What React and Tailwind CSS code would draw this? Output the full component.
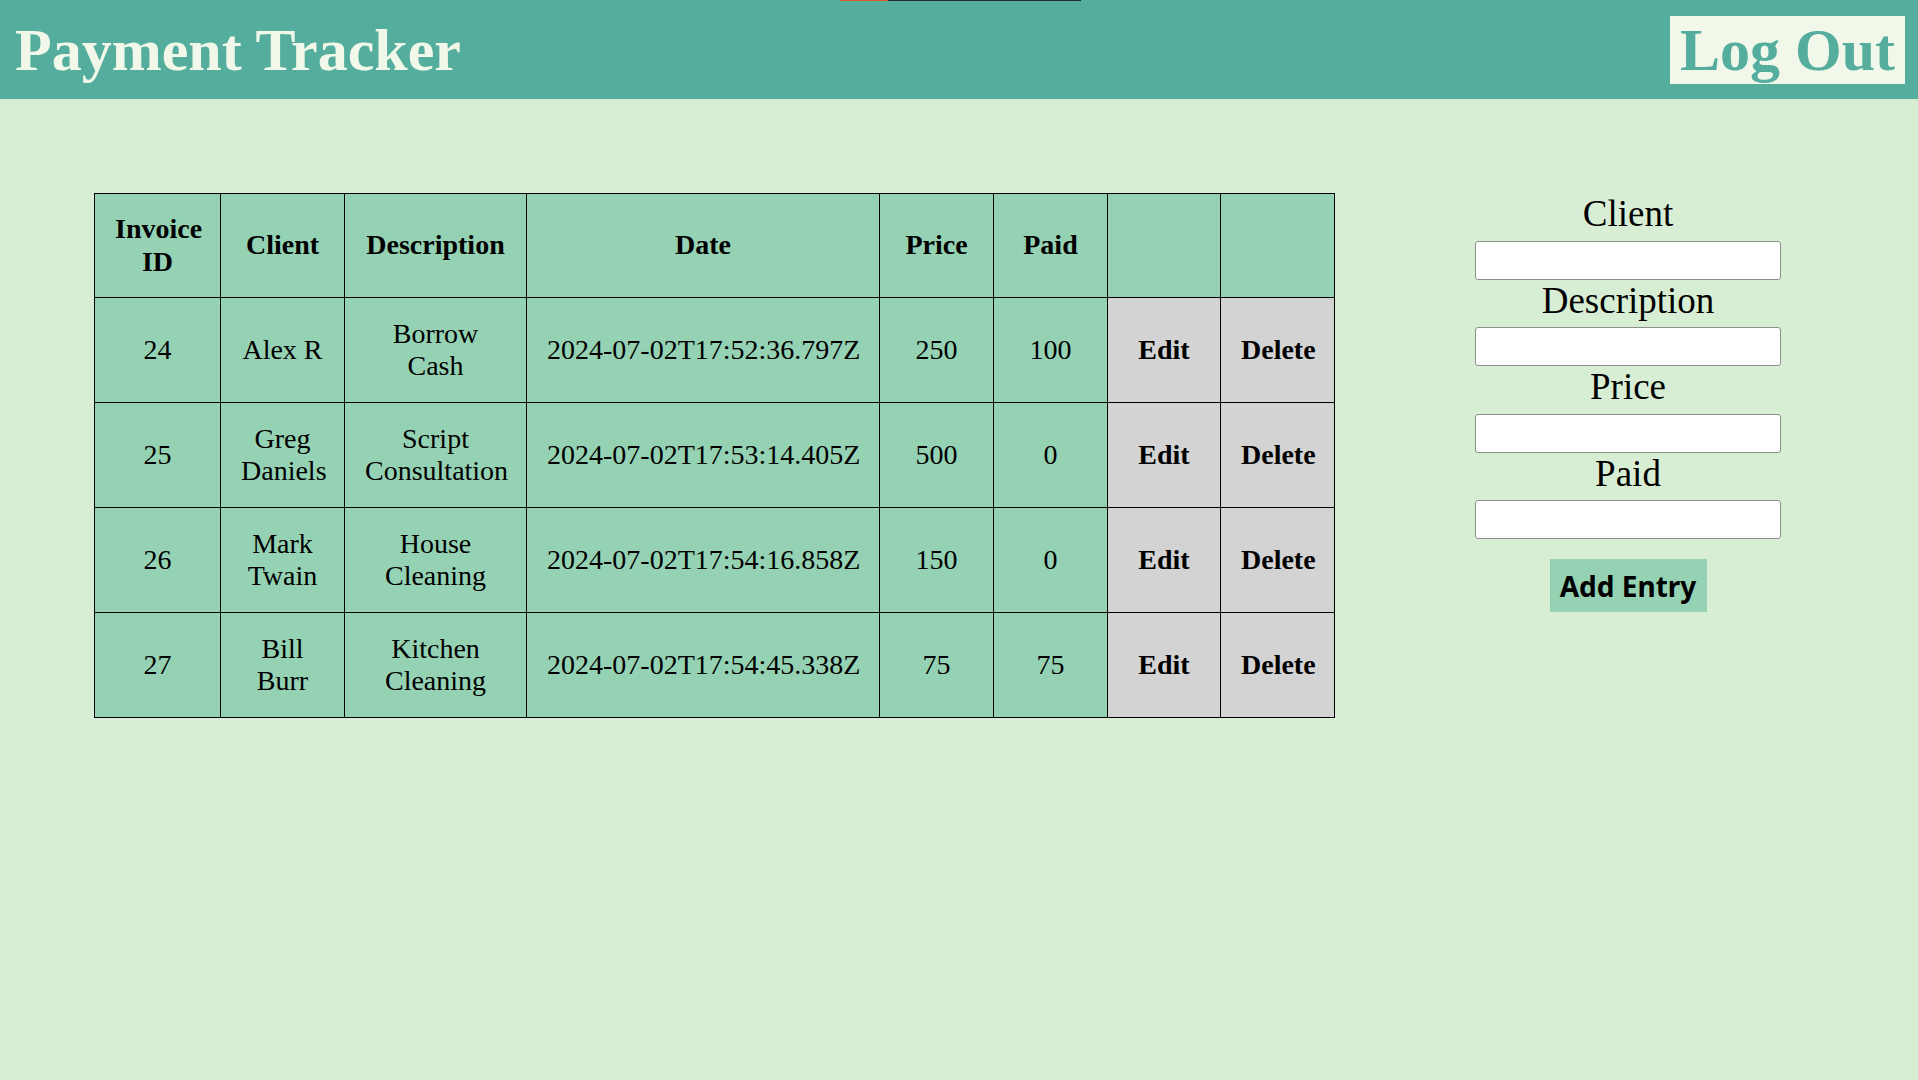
import React from "react";

const entries = [
  { id: 24, client: "Alex R", description: "Borrow Cash", date: "2024-07-02T17:52:36.797Z", price: 250, paid: 100 },
  { id: 25, client: "Greg Daniels", description: "Script Consultation", date: "2024-07-02T17:53:14.405Z", price: 500, paid: 0 },
  { id: 26, client: "Mark Twain", description: "House Cleaning", date: "2024-07-02T17:54:16.858Z", price: 150, paid: 0 },
  { id: 27, client: "Bill Burr", description: "Kitchen Cleaning", date: "2024-07-02T17:54:45.338Z", price: 75, paid: 75 },
];

const fields = ["Client", "Description", "Price", "Paid"];

const App = () => {
  return (
    <div className="min-h-screen bg-[#d8eed4] font-['Liberation_Serif',serif] text-black relative">
      {/* thin loading strip at the very top */}
      <div className="absolute top-0 left-[840px] flex h-px">
        <div className="w-[48px] bg-[#e0552f]"></div>
        <div className="w-[193px] bg-[#1f2937]"></div>
      </div>

      <header className="h-[99px] bg-[#55ae9d] flex items-center justify-between pl-[15px] pr-[13px]">
        <h1 className="text-[60px] font-bold leading-[68px] text-[#f1f8e9]">Payment Tracker</h1>
        <button className="h-[68px] px-[10px] bg-[#f1f8e9] text-[#55ae9d] text-[60px] font-bold leading-[68px]">
          Log Out
        </button>
      </header>

      <div className="flex items-start pt-[94px] pl-[94px]">
        <table className="table-fixed border-collapse w-[1240px] text-[28px] leading-[1.15] text-center">
          <colgroup>
            <col className="w-[126px]" />
            <col className="w-[124px]" />
            <col className="w-[182px]" />
            <col className="w-[353px]" />
            <col className="w-[114px]" />
            <col className="w-[114px]" />
            <col className="w-[113px]" />
            <col className="w-[114px]" />
          </colgroup>
          <thead>
            <tr className="bg-[#95d2b4] h-[104px]">
              <th className="border border-black px-5 py-[19px]">Invoice ID</th>
              <th className="border border-black px-5 py-[19px]">Client</th>
              <th className="border border-black px-5 py-[19px]">Description</th>
              <th className="border border-black px-5 py-[19px]">Date</th>
              <th className="border border-black px-5 py-[19px]">Price</th>
              <th className="border border-black px-5 py-[19px]">Paid</th>
              <th className="border border-black px-5 py-[19px]"></th>
              <th className="border border-black px-5 py-[19px]"></th>
            </tr>
          </thead>
          <tbody>
            {entries.map((e) => (
              <tr key={e.id} className="bg-[#95d2b4] h-[105px]">
                <td className="border border-black px-5 py-[19px]">{e.id}</td>
                <td className="border border-black px-5 py-[19px]">{e.client}</td>
                <td className="border border-black px-5 py-[19px]">{e.description}</td>
                <td className="border border-black px-5 py-[19px] whitespace-nowrap">{e.date}</td>
                <td className="border border-black px-5 py-[19px]">{e.price}</td>
                <td className="border border-black px-5 py-[19px]">{e.paid}</td>
                <td className="border border-black px-5 py-[19px] bg-[#d3d3d3] font-bold">Edit</td>
                <td className="border border-black px-5 py-[19px] bg-[#d3d3d3] font-bold">Delete</td>
              </tr>
            ))}
          </tbody>
        </table>

        <div className="ml-[140px] w-[306px] flex flex-col items-center">
          {fields.map((f) => (
            <div key={f} className="w-full flex flex-col items-center">
              <label className="text-[37px] leading-[1.15] mb-[5px]">{f}</label>
              <input className="w-full h-[39px] bg-white border border-[#8f8f8f] rounded-[3px]" />
            </div>
          ))}
          <button className="mt-[20px] w-[157px] h-[53px] bg-[#95d2b4] font-['Noto_Sans',sans-serif] font-bold text-[28px] leading-none text-black">
            Add Entry
          </button>
        </div>
      </div>
    </div>
  );
};

export default App;
